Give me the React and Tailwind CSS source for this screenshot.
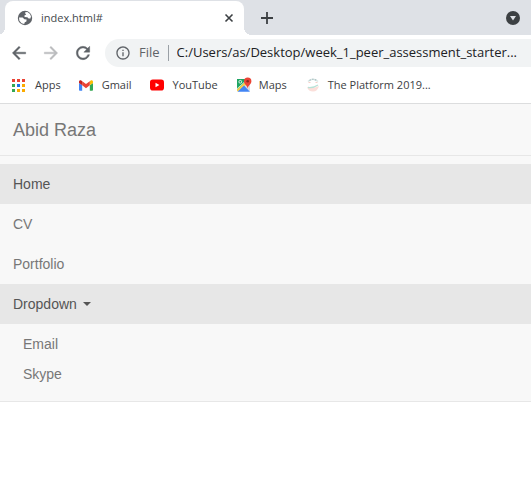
import { MdInfoOutline } from "react-icons/md";

function BackIcon() {
  return (
    <svg viewBox="0 0 24 24" className="size-5" fill="currentColor" stroke="currentColor" strokeWidth="0.500" aria-hidden="true">
      <path d="M20 11H7.830l5.590-5.590L12 4l-8 8 8 8 1.410-1.410L7.830 13H20v-2z" />
    </svg>
  );
}

function ForwardIcon() {
  return (
    <svg viewBox="0 0 24 24" className="size-5" fill="currentColor" stroke="currentColor" strokeWidth="0.500" aria-hidden="true">
      <path d="m12 4-1.410 1.410L16.170 11H4v2h12.170l-5.580 5.590L12 20l8-8z" />
    </svg>
  );
}

function ReloadIcon() {
  return (
    <svg viewBox="0 0 24 24" className="size-5" fill="currentColor" stroke="currentColor" strokeWidth="0.500" aria-hidden="true">
      <path d="M17.650 6.350A7.958 7.958 0 0 0 12 4c-4.420 0-7.990 3.580-7.990 8s3.570 8 7.990 8c3.730 0 6.840-2.550 7.730-6h-2.080A5.990 5.990 0 0 1 12 18c-3.310 0-6-2.690-6-6s2.690-6 6-6c1.660 0 3.140.690 4.220 1.780L13 11h7V4l-2.350 2.350z" />
    </svg>
  );
}

function GlobeIcon() {
  return (
    <svg viewBox="0 0 16 16" className="size-4 shrink-0" aria-hidden="true">
      <circle cx="8" cy="8" r="7.2" fill="#5f6368" />
      <path d="M8.2 2.2 10.4 2 13 4 14 6.6 13.4 8.6 11.6 8.6 10.4 7.2 7.6 7 7.4 5.4 9.2 4.4 8.2 3.4Z" fill="#fff" />
      <path d="M2 7.4 5.6 7.6 7.4 9.2 9.6 9.6 9.4 11.4 7.8 12.2 7.2 14 4.6 13.2 2.4 10.8Z" fill="#fff" />
    </svg>
  );
}

function CloseIcon() {
  return (
    <svg viewBox="0 0 14 14" className="size-[14px]" fill="none" aria-hidden="true">
      <path d="m3.500 3.500 7 7m0-7-7 7" stroke="currentColor" strokeWidth="1.600" />
    </svg>
  );
}

function PlusIcon() {
  return (
    <svg viewBox="0 0 18 18" className="size-[18px]" fill="none" aria-hidden="true">
      <path d="M9 3v12M3 9h12" stroke="currentColor" strokeWidth="1.800" />
    </svg>
  );
}

function AppsIcon() {
  return (
    <svg viewBox="0 0 13 13" className="size-[13px] shrink-0" aria-hidden="true">
      <path d="M0 0h3v3H0zM5 0h3v3H5zM10 0h3v3h-3z" fill="#ea4335" />
      <path d="M0 5h3v3H0zM0 10h3v3H0z" fill="#34a853" />
      <path d="M5 5h3v3H5z" fill="#1a73e8" />
      <path d="M10 5h3v3h-3zM5 10h3v3H5zM10 10h3v3h-3z" fill="#fbab00" />
    </svg>
  );
}

function GmailIcon() {
  return (
    <svg viewBox="52 42 88 66" className="h-[11px] w-[14px] shrink-0" aria-hidden="true">
      <path fill="#4285f4" d="M58 108h14V74L52 59v43c0 3.320 2.690 6 6 6" />
      <path fill="#34a853" d="M120 108h14c3.320 0 6-2.690 6-6V59l-20 15" />
      <path fill="#fbbc04" d="M120 48v26l20-15v-8c0-7.420-8.470-11.650-14.400-7.200" />
      <path fill="#ea4335" d="M72 74V48l24 18 24-18v26L96 92" />
      <path fill="#c5221f" d="M52 51v8l20 15V48l-5.600-4.200c-5.940-4.450-14.400-.22-14.400 7.200" />
    </svg>
  );
}

function YouTubeIcon() {
  return (
    <svg viewBox="0 0 14 12" className="h-3 w-[14px] shrink-0" aria-hidden="true">
      <rect width="14" height="11" y="0.500" rx="2.800" fill="#f00" />
      <path d="M5.500 3.700v4.600L9.400 6z" fill="#fff" />
    </svg>
  );
}

function MapsIcon() {
  return (
    <svg viewBox="0 0 16 16" className="size-4 shrink-0" aria-hidden="true">
      <path d="M1 2h12v5L1 13z" fill="#1fa463" />
      <path d="M1 12.500 11 3l3 3v1L8 9.500l-6 5-1-.500z" fill="#fbd04a" />
      <path d="m8 9 6 5.500V6z" fill="#dadce0" />
      <path d="M1.500 14.800 8 8.600l6 6.200z" fill="#4285f4" />
      <path d="M1 11.800 10 3.500" stroke="#fff" strokeWidth="0.700" />
      <circle cx="4.300" cy="4.800" r="1.400" fill="none" stroke="#fff" strokeWidth="0.800" />
      <path d="M11.700.6a3.700 3.700 0 0 0-3.700 3.700c0 3 3.100 3.700 3.700 7.300.6-3.600 3.700-4.300 3.700-7.300A3.700 3.700 0 0 0 11.700.6" fill="#ea4335" />
      <circle cx="11.700" cy="4.300" r="1.300" fill="#8c2a20" />
    </svg>
  );
}

function PlatformIcon() {
  return (
    <svg viewBox="0 0 16 16" className="size-4 shrink-0" fill="none" aria-hidden="true">
      <path d="M3 4.500Q8 0 13 4.500" stroke="#dbe8e6" strokeWidth="1.600" />
      <path d="M4.500 3.500Q8 1 11.500 3.500" stroke="#a9bfc2" strokeWidth="1.200" strokeDasharray="1.500 1.300" />
      <path d="M3.500 5.500h2m5 0h2" stroke="#f6cfc9" />
      <path d="M2 10q6.500 2 12-1-1.500 5.500-6 5.500T2 10" fill="#fbdfda" />
      <path d="M3 10.500q6 .500 10-2.500" stroke="#b9e2d7" strokeWidth="1.300" />
    </svg>
  );
}

const bookmarks = [
  { label: "Apps", Icon: AppsIcon, gap: "gap-[10px]" },
  { label: "Gmail", Icon: GmailIcon, gap: "gap-[9px]" },
  { label: "YouTube", Icon: YouTubeIcon, gap: "gap-[9px]" },
  { label: "Maps", Icon: MapsIcon, gap: "gap-[7px]" },
  { label: "The Platform 2019...", Icon: PlatformIcon, gap: "gap-[7px]" },
];

function TabStrip() {
  return (
    <div className="flex h-[35px] items-end bg-[#dee1e6] pl-[5px]">
      <div className="relative flex h-[34px] w-[239px] items-center rounded-t-lg bg-white pr-2 pl-3 text-[#45494d]">
        <GlobeIcon />
        <span className="ml-2 flex-1 text-[11px]">index.html#</span>
        <button type="button" aria-label="Close tab" className="text-[#3c4043]">
          <CloseIcon />
        </button>
        <span className="absolute bottom-0 -left-2 size-2 bg-[radial-gradient(circle_at_0_0,#dee1e6_8px,#fff_8px)]" />
        <span className="absolute -right-2 bottom-0 size-2 bg-[radial-gradient(circle_at_100%_0,#dee1e6_8px,#fff_8px)]" />
      </div>
      <button type="button" aria-label="New tab" className="ml-[14px] flex h-[34px] items-center text-[#3c4043]">
        <PlusIcon />
      </button>
      <button type="button" aria-label="Search tabs" className="mr-[11px] ml-auto flex h-[34px] items-center">
        <svg viewBox="0 0 14 14" className="size-[14px]" aria-hidden="true">
          <circle cx="7" cy="7" r="7" fill="#3c4043" />
          <path d="M4 5h6L7 9.500z" fill="#dee1e6" />
        </svg>
      </button>
    </div>
  );
}

function Toolbar() {
  return (
    <div className="flex h-9 items-center pl-[9px] text-[#5f6368]">
      <button type="button" aria-label="Back"><BackIcon /></button>
      <button type="button" aria-label="Forward" disabled className="ml-3 text-[#babcbe]"><ForwardIcon /></button>
      <button type="button" aria-label="Reload" className="ml-3"><ReloadIcon /></button>
      <div className="ml-3 flex h-7 min-w-0 flex-1 items-center rounded-l-full bg-[#f1f3f4] pl-[10px]">
        <MdInfoOutline className="size-4 shrink-0" />
        <label htmlFor="address" className="ml-2 text-[13px]">File</label>
        <span className="mx-2 h-4 w-px shrink-0 bg-[#9aa0a6]" />
        <input
          id="address"
          type="text"
          defaultValue="C:/Users/as/Desktop/week_1_peer_assessment_starter..."
          className="min-w-0 flex-1 bg-transparent text-[13px] text-[#202124] outline-none"
        />
      </div>
    </div>
  );
}

function Bookmarks() {
  return (
    <nav aria-label="Bookmarks" className="flex h-[33px] items-center gap-[18px] border-b border-[#dcddde] pb-1 pl-3 text-[11px] text-[#3c4043]">
      {bookmarks.map(({ label, Icon, gap }) => (
        <a key={label} href="#" className={`flex shrink-0 items-center ${gap}`}>
          <Icon />
          {label}
        </a>
      ))}
    </nav>
  );
}

function SiteNav() {
  return (
    <nav className="border-b border-[#e7e7e7] bg-[#f8f8f8] font-['Liberation_Sans',Arial,sans-serif] text-sm text-[#777]">
      <div className="border-b border-[#e7e7e7] px-[13px] pt-4 pb-[15px]">
        <a href="#" className="block text-lg leading-5">Abid Raza</a>
      </div>
      <ul className="pt-2 pb-[7px] leading-5">
        <li><a href="#" className="block bg-[#e7e7e7] px-[13px] py-[10px] text-[#555]">Home</a></li>
        <li><a href="#" className="block px-[13px] py-[10px]">CV</a></li>
        <li><a href="#" className="block px-[13px] py-[10px]">Portfolio</a></li>
        <li>
          <button type="button" aria-expanded="true" className="flex w-full items-center gap-[6px] bg-[#e7e7e7] px-[13px] py-[10px] text-[#555]">
            Dropdown
            <span className="border-x-4 border-t-4 border-x-transparent border-t-[#555]" />
          </button>
          <ul className="py-[5px]">
            <li><a href="#" className="block px-[23px] py-[5px]">Email</a></li>
            <li><a href="#" className="block px-[23px] py-[5px]">Skype</a></li>
          </ul>
        </li>
      </ul>
    </nav>
  );
}

export default function App() {
  return (
    <div className="min-h-screen bg-white">
      <header className="font-['Open_Sans','Noto_Sans',sans-serif]">
        <TabStrip />
        <Toolbar />
        <Bookmarks />
      </header>
      <SiteNav />
    </div>
  );
}
